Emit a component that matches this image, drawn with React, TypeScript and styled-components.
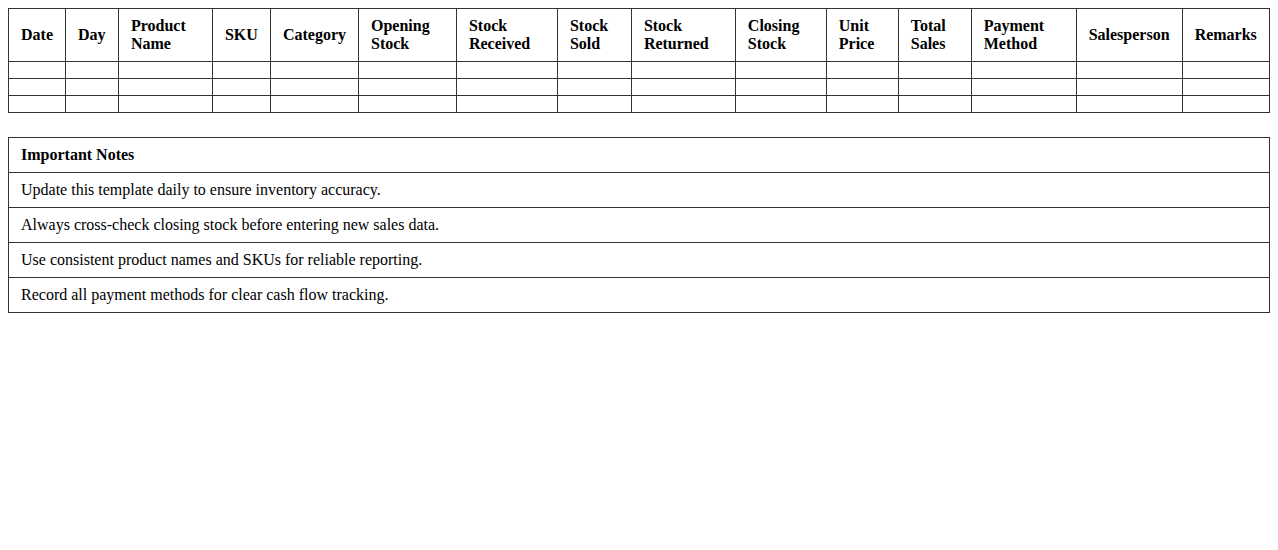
import React from 'react'
import styled, { createGlobalStyle } from 'styled-components'

const columns: { label: string; width: number }[] = [
	{ label: 'Date', width: 57 },
	{ label: 'Day', width: 53 },
	{ label: 'Product Name', width: 94 },
	{ label: 'SKU', width: 58 },
	{ label: 'Category', width: 88 },
	{ label: 'Opening Stock', width: 98 },
	{ label: 'Stock Received', width: 101 },
	{ label: 'Stock Sold', width: 74 },
	{ label: 'Stock Returned', width: 104 },
	{ label: 'Closing Stock', width: 91 },
	{ label: 'Unit Price', width: 72 },
	{ label: 'Total Sales', width: 73 },
	{ label: 'Payment Method', width: 105 },
	{ label: 'Salesperson', width: 106 },
	{ label: 'Remarks', width: 87 },
]

const notes = [
	'Update this template daily to ensure inventory accuracy.',
	'Always cross-check closing stock before entering new sales data.',
	'Use consistent product names and SKUs for reliable reporting.',
	'Record all payment methods for clear cash flow tracking.',
]

const GlobalStyle = createGlobalStyle`
	body {
		margin: 8px;
		background: #fff;
		color: #000;
		font-family: 'Liberation Serif', 'Times New Roman', serif;
	}
`

export default function App() {
	return (
		<>
			<GlobalStyle />
			<SheetTable>
				<thead>
					<tr>
						{columns.map((c) => (
							// width is the content box: cell width minus padding and border
							<HeadCell key={c.label} style={{ width: c.width - 25 }}>
								{c.label}
							</HeadCell>
						))}
					</tr>
				</thead>
				<tbody>
					{[0, 1, 2].map((r) => (
						<tr key={r}>
							{columns.map((c) => (
								<Cell key={c.label} />
							))}
						</tr>
					))}
				</tbody>
			</SheetTable>

			<NotesTable>
				<tbody>
					<tr>
						<NoteCell $heading>Important Notes</NoteCell>
					</tr>
					{notes.map((n) => (
						<tr key={n}>
							<NoteCell>{n}</NoteCell>
						</tr>
					))}
				</tbody>
			</NotesTable>
		</>
	)
}

const SheetTable = styled.table`
	width: 100%;
	border-collapse: collapse;
	font-size: 16px;
`

const HeadCell = styled.th`
	border: 1px solid #333;
	padding: 8px 12px;
	text-align: left;
	vertical-align: middle;
	font-weight: bold;
	line-height: 18px;
`

const Cell = styled.td`
	border: 1px solid #333;
	padding: 8px 12px;
	height: 0;
`

const NotesTable = styled.table`
	width: 100%;
	margin-top: 24px;
	border-collapse: collapse;
	font-size: 16px;
`

const NoteCell = styled.td<{ $heading?: boolean }>`
	border: 1px solid #333;
	padding: 8px 12px;
	line-height: 18px;
	font-weight: ${({ $heading }) => ($heading ? 'bold' : 'normal')};
`
